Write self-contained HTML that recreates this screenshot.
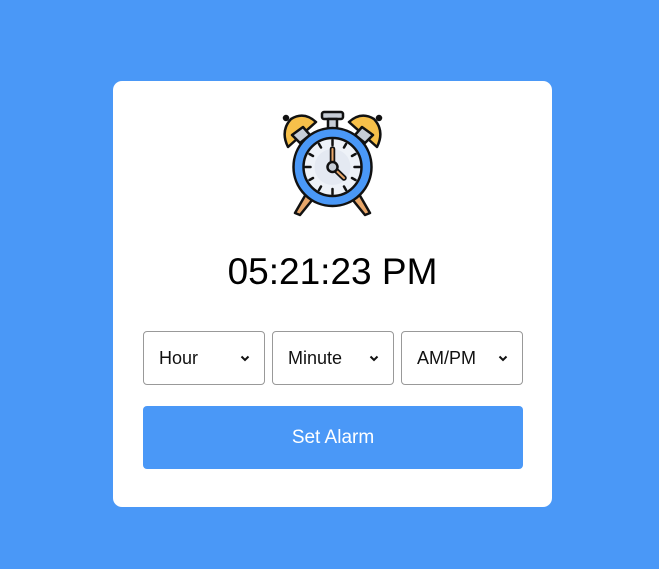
<!DOCTYPE html>
<html><head><style>
body{margin:0;width:659px;height:569px;background:#4a98f7;font-family:"Liberation Sans",sans-serif;position:relative;overflow:hidden}
.card{position:absolute;left:113px;top:81px;width:439px;height:426px;background:#fff;border-radius:9px}
.time{position:absolute;top:250px;text-align:center;font-size:37px;color:#000;line-height:44px}
.sel{position:absolute;top:331px;height:54px;border:1px solid #999;border-radius:4px;box-sizing:border-box;font-size:18px;line-height:52px;padding-left:15px;color:#111}
.sel svg{position:absolute;right:14px;top:23px}
.btn{position:absolute;left:143px;top:406px;width:380px;height:63px;background:#4a98f7;border-radius:4px;color:#fff;font-size:19px;text-align:center;line-height:64px}
</style></head><body>
<div class="card"></div>
<svg style="position:absolute;left:270px;top:105px" width="125" height="115" viewBox="0 0 125 115">
<g stroke="#111" stroke-width="2.5" stroke-linejoin="round" stroke-linecap="round">
<path d="M25 108 L36 89 L43 94 L30 110 Z" fill="#e8a76a"/>
<path d="M100 108 L89 89 L82 94 L95 110 Z" fill="#e8a76a"/>
<path d="M18 42 L46 17 Q34 6 21 14 Q10 26 18 42Z" fill="#f7c04a"/>
<path d="M107 42 L79 17 Q91 6 104 14 Q115 26 107 42Z" fill="#f7c04a"/>
<path d="M22 30 L33 22 L40 30 L30 38Z" fill="#c7cdd6"/>
<path d="M103 30 L92 22 L85 30 L95 38Z" fill="#c7cdd6"/>
<circle cx="16" cy="13" r="2" fill="#111"/><circle cx="109" cy="13" r="2" fill="#111"/>
<rect x="52" y="7" width="21" height="7" rx="2" fill="#c7cdd6"/>
<rect x="58" y="14" width="9" height="10" fill="#c7cdd6"/>
<circle cx="62.5" cy="62" r="39" fill="#4a98f7"/>
<circle cx="62.5" cy="62" r="29" fill="#eef2f8"/>
</g>
<circle cx="62.5" cy="62" r="18" fill="#e4e9f2"/>
<g stroke="#111" stroke-width="2.5" stroke-linecap="round">
<path d="M62.5 35v5M62.5 84v5M35.5 62h5M84.5 62h5M49 39l2 3.5M76 39l-2 3.5M39.5 49l3.5 2M85.5 49l-3.5 2M39.5 75l3.5-2M85.5 75l-3.5-2M49 85l2-3.5M76 85l-2-3.5"/>
<path d="M62.5 62V44" stroke-width="5.5"/>
<path d="M62.5 62V44" stroke="#e8a76a" stroke-width="2"/>
<path d="M62.5 62L74 73" stroke-width="5.5"/>
<path d="M62.5 62L74 73" stroke="#e8a76a" stroke-width="2"/>
</g>
<circle cx="62.5" cy="62" r="5" fill="#c7cdd6" stroke="#111" stroke-width="2.5"/>
</svg>
<div class="time" style="left:113px;width:439px">05:21:23 PM</div>
<div class="sel" style="left:143px;width:122px">Hour<svg width="10" height="7"><path d="M1.5 1.5L5 5L8.5 1.5" fill="none" stroke="#111" stroke-width="2"/></svg></div>
<div class="sel" style="left:272px;width:122px">Minute<svg width="10" height="7"><path d="M1.5 1.5L5 5L8.5 1.5" fill="none" stroke="#111" stroke-width="2"/></svg></div>
<div class="sel" style="left:401px;width:122px">AM/PM<svg width="10" height="7"><path d="M1.5 1.5L5 5L8.5 1.5" fill="none" stroke="#111" stroke-width="2"/></svg></div>
<div class="btn">Set Alarm</div>
</body></html>
